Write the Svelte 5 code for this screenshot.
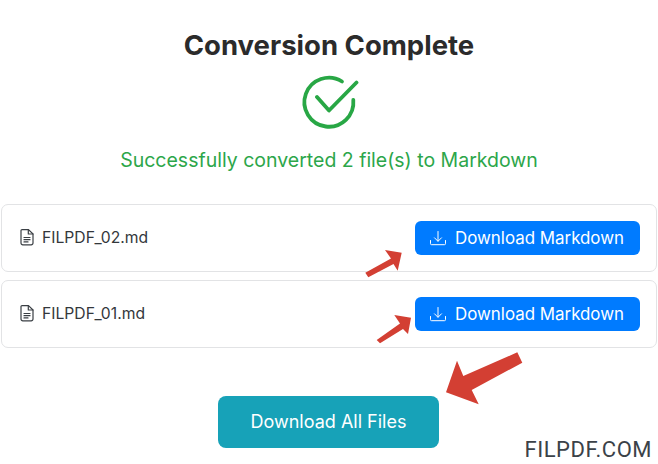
<script>
  const files = ['FILPDF_02.md', 'FILPDF_01.md'];
</script>

<main class="page">
  <h1>Conversion Complete</h1>
  <svg class="check" width="60" height="60" viewBox="0 0 60 60" fill="none" stroke="#28a745" stroke-width="3.800" stroke-linecap="round" stroke-linejoin="round">
    <path d="M43 9.500A24.500 24.500 0 1 0 54.300 28" />
    <path d="M18 25L30 38.500 57.500 10.500" />
  </svg>
  <p class="status">Successfully converted 2 file(s) to Markdown</p>

  <div class="list">
    {#each files as f}
      <div class="row">
        <div class="name">
          <svg width="16" height="18" viewBox="0 0 16 18" fill="none" stroke="#3a3f44" stroke-width="1.200" stroke-linejoin="round" stroke-linecap="round">
            <path d="M3 1.600h6.500L14 6v9a1.800 1.800 0 0 1-1.800 1.800H3.800A1.800 1.800 0 0 1 2 15V2.600a1 1 0 0 1 1-1z" />
            <path d="M9.300 1.800V6H14M5 9.500h6M5 11.700h6M5 13.900h4" />
          </svg>
          <span>{f}</span>
        </div>
        <button class="dl">
          <svg width="18" height="18" viewBox="0 0 18 18" fill="none" stroke="#fff" stroke-width="1" stroke-linecap="round" stroke-linejoin="round">
            <path d="M1.500 11.500v3.200a1 1 0 0 0 1 1h13a1 1 0 0 0 1-1v-3.200" />
            <path d="M9 2.500v9.500M5.500 8.800L9 12.300l3.500-3.500" />
          </svg>
          Download Markdown
        </button>
      </div>
    {/each}
  </div>

  <button class="all">Download All Files</button>

  <svg class="arrows" width="658" height="464" viewBox="0 0 658 464" fill="#d33f33">
    <polygon points="401.700,252.700 385,250 391,258.500 365.300,272.700 368.300,277.300 393.500,264 397.700,270.700" />
    <polygon points="411,317.700 394.300,315 400,323.500 376.700,340 380,343.300 403,329 408,334" />
    <polygon points="446,392.300 457,360.700 463.300,376 517.300,352.300 522.300,362.700 471.700,390 478.700,404.300" />
  </svg>
  <div class="mark">FILPDF.COM</div>
</main>

<style>
  :global(body) {
    margin: 0;
    background: #fff;
  }
  .page {
    position: relative;
    width: 658px;
    height: 464px;
    overflow: hidden;
    box-sizing: border-box;
    padding-top: 28px;
    display: flex;
    flex-direction: column;
    align-items: center;
    font-family: Inter, "Open Sans", sans-serif;
  }
  h1 {
    margin: 0;
    font-size: 27.500px;
    line-height: 34px;
    font-weight: 700;
    color: #2b2b2b;
  }
  .check {
    margin-top: 10px;
  }
  .status {
    margin: 15px 0 0;
    font-size: 19.500px;
    line-height: 26px;
    color: #2ca64a;
  }
  .list {
    margin-top: 31px;
    width: 656px;
    display: flex;
    flex-direction: column;
    gap: 8px;
  }
  .row {
    box-sizing: border-box;
    height: 68px;
    border: 1px solid #e2e3e5;
    border-radius: 7px;
    padding: 0 16px 0 17px;
    display: flex;
    align-items: center;
    justify-content: space-between;
  }
  .name {
    display: flex;
    align-items: center;
    gap: 7px;
    font-size: 15.700px;
    color: #33373b;
    position: relative;
    top: -1px;
  }
  button {
    border: none;
    font-family: inherit;
    color: #fff;
    cursor: pointer;
  }
  .dl {
    width: 225px;
    height: 34px;
    background: #007bff;
    border-radius: 6px;
    display: flex;
    align-items: center;
    justify-content: center;
    gap: 8px;
    padding: 0 2px 0 0;
    font-size: 16.900px;
  }
  .all {
    margin: 48px 1px 0 0;
    width: 221px;
    height: 52px;
    background: #17a2b8;
    border-radius: 8px;
    font-size: 18px;
    padding: 0 0 2px;
  }
  .arrows {
    position: absolute;
    left: 0;
    top: 0;
    pointer-events: none;
  }
  .mark {
    position: absolute;
    right: 6px;
    top: 436px;
    font-family: "Roboto", sans-serif;
    font-size: 22px;
    font-weight: 400;
    line-height: 28px;
    color: #3b4248;
    letter-spacing: 0.500px;
  }
</style>
